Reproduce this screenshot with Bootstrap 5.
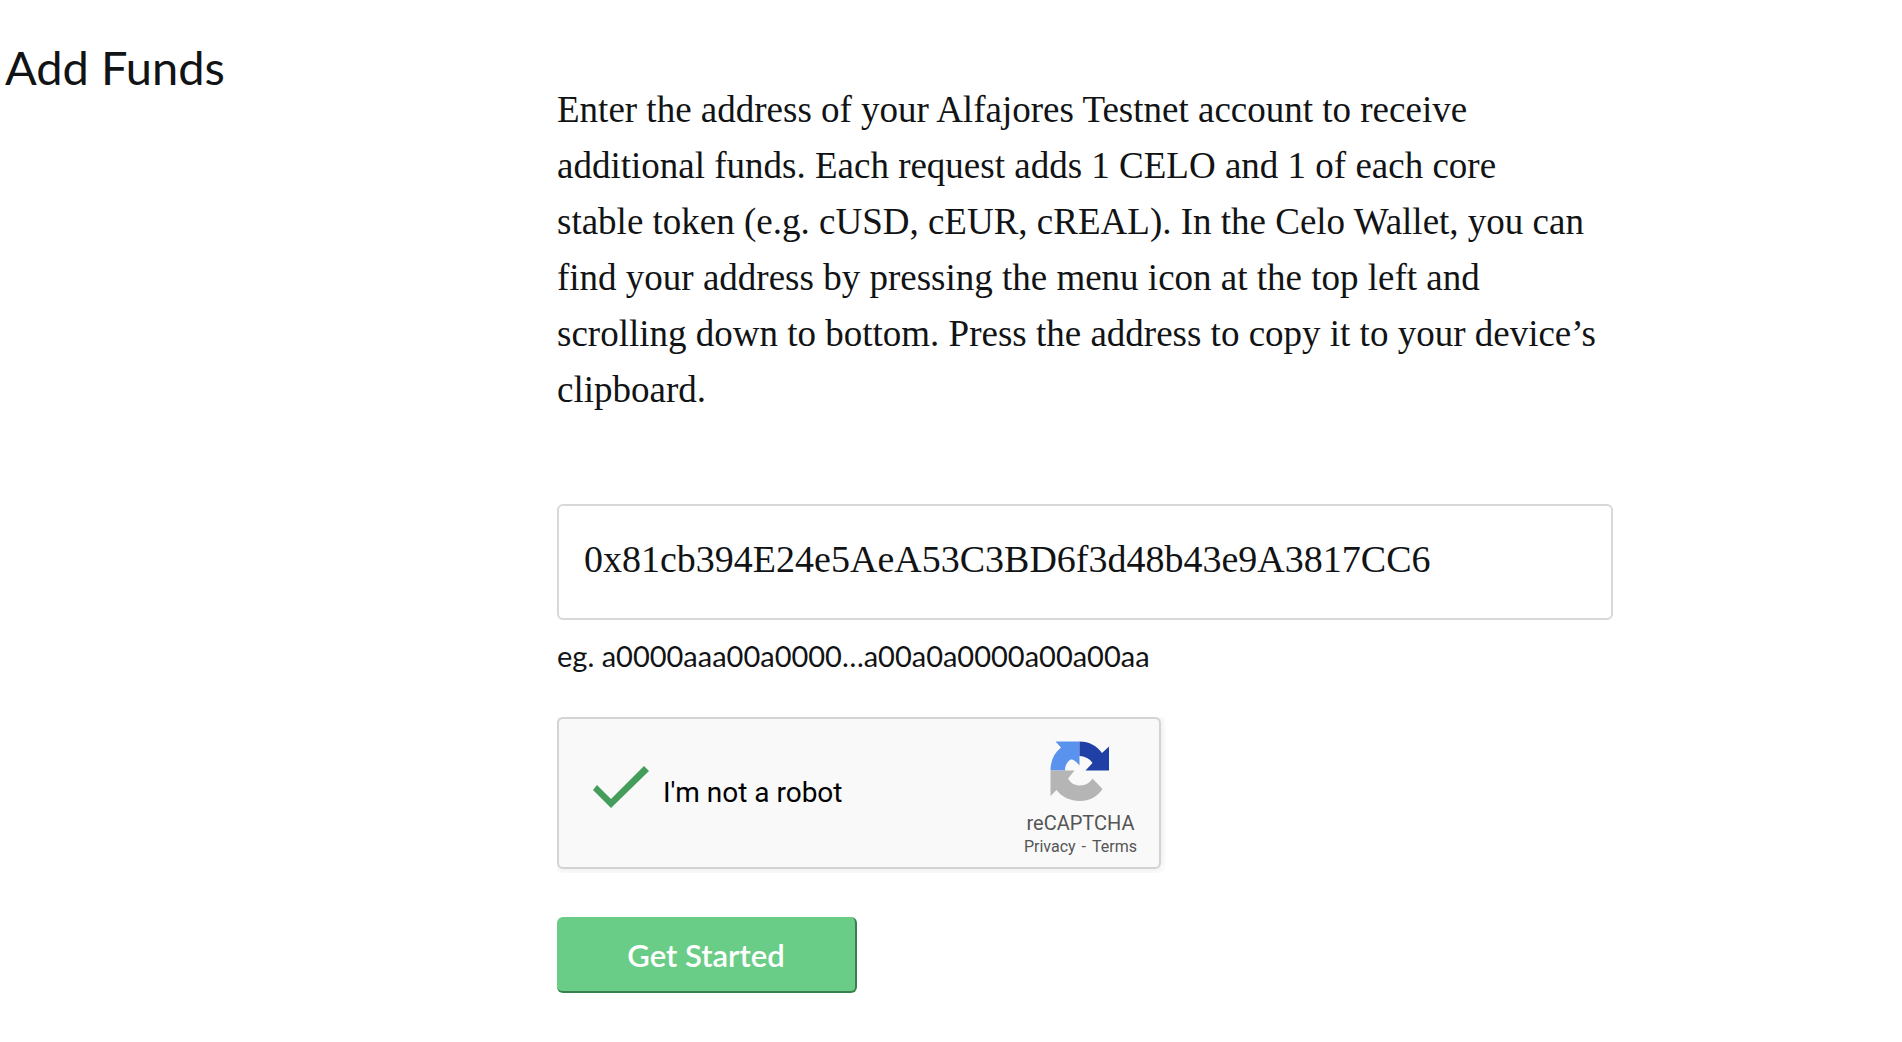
<!DOCTYPE html>
<html lang="en">
<head>
<meta charset="utf-8">
<meta name="viewport" content="width=device-width, initial-scale=1">
<title>Add Funds</title>
<link href="https://cdn.jsdelivr.net/npm/bootstrap@5.3.0/dist/css/bootstrap.min.css" rel="stylesheet">
<style>
  body { color: #111315; background: #fff; font-family: Lato, "Open Sans", sans-serif; }
  .page-head { flex: 0 0 557px; padding: 38px 5px 0; }
  .page-head h1 { font-size: 47px; line-height: 58px; font-weight: 400; }
  .faucet { flex: 0 1 1056px; min-width: 0; padding-top: 82px; }
  .intro { font: 37px/56px "Liberation Serif", serif; margin-bottom: 86px; }
  .address { height: 116px; padding: 0 25px 6px; border: 2px solid #d8d8d8; border-radius: 6px; color: #111315; font: 38px/56px "Liberation Serif", serif; }
  .hint { font-size: 29px; line-height: 36px; margin: 18px 0 43px; }
  .captcha { width: 604px; max-width: 100%; height: 152px; padding: 0 22px 0 34px; background: #f9f9f9; border: 2px solid #d3d3d3; border-radius: 6px; box-shadow: 0 0 8px 2px rgba(0,0,0,.08); clip-path: inset(0 -4px -4px 0); margin-bottom: 48px; font-family: Roboto, sans-serif; }
  .robot { gap: 14px; color: #000; font-size: 28px; line-height: 34px; }
  .tick { appearance: none; width: 56px; height: 42px; margin: 0 0 12px; background: #459d5b; clip-path: polygon(0 24px, 4px 19px, 18px 33px, 51px 0, 56px 5px, 18px 42px); }
  .brand { color: #555; font-size: 20px; line-height: 24px; padding-top: 22px; }
  .brand svg { margin-bottom: 10px; }
  .legal { gap: 6px; font-size: 16px; line-height: 24px; }
  .legal a { color: inherit; }
  .start { width: 300px; height: 76px; padding: 2px 0 0; color: #fff; background: #6acd87; border: solid #6acd87; border-width: 0 2px 2px 0; border-right-color: #3a7f50; border-bottom-color: #3a7f50; border-radius: 6px; font-size: 31px; font-weight: 600; }
  .start:hover { color: #fff; background: #5dc07a; }
</style>
</head>
<body>
<main class="d-flex">
  <header class="page-head"><h1 class="m-0">Add Funds</h1></header>
  <form class="faucet" onsubmit="return false">
    <p class="intro">Enter the address of your Alfajores Testnet account to receive<br> additional funds. Each request adds 1 CELO and 1 of each core<br> stable token (e.g. cUSD, cEUR, cREAL). In the Celo Wallet, you can<br> find your address by pressing the menu icon at the top left and<br> scrolling down to bottom. Press the address to copy it to your device’s<br> clipboard.</p>
    <input class="form-control address" type="text" aria-label="Account address" aria-describedby="hint" value="0x81cb394E24e5AeA53C3BD6f3d48b43e9A3817CC6">
    <p class="hint" id="hint">eg. a0000aaa00a0000…a00a0a0000a00a00aa</p>
    <div class="captcha d-flex justify-content-between">
      <div class="robot d-flex align-items-center">
        <input class="tick" type="checkbox" id="robot" checked>
        <label for="robot">I'm not a robot</label>
      </div>
      <div class="brand d-flex flex-column align-items-center">
        <svg width="60" height="60" viewBox="0 0 60 60" aria-hidden="true">
          <path fill="#5a93ee" d="M29.500 .5H5.500l5.500 6C4 12 .5 20 .5 29.500h14.500c0-5 2-8.500 5.500-11 3-.5 5 1.500 9 6z"/>
          <path fill="#2140a5" d="M29.500 .5c10 0 17.500 4.500 22.500 11.500l7-6.500v24H35.500l7-7.500C40 18 36 15.500 29.500 15z"/>
          <path fill="#b5b5b5" d="M.5 29.500h24L18 37.500c3 5 7 7 12 7 6 0 10-3 12.500-7L52.500 48C47 56 39.500 60 30 60 20 60 12 56 6.500 49L.5 55z"/>
        </svg>
        <span>reCAPTCHA</span>
        <span class="legal d-flex"><a class="text-decoration-none" href="#">Privacy</a><span>-</span><a class="text-decoration-none" href="#">Terms</a></span>
      </div>
    </div>
    <button class="btn start d-block" type="submit">Get Started</button>
  </form>
</main>
<script src="https://cdn.jsdelivr.net/npm/bootstrap@5.3.0/dist/js/bootstrap.bundle.min.js"></script>
</body>
</html>
